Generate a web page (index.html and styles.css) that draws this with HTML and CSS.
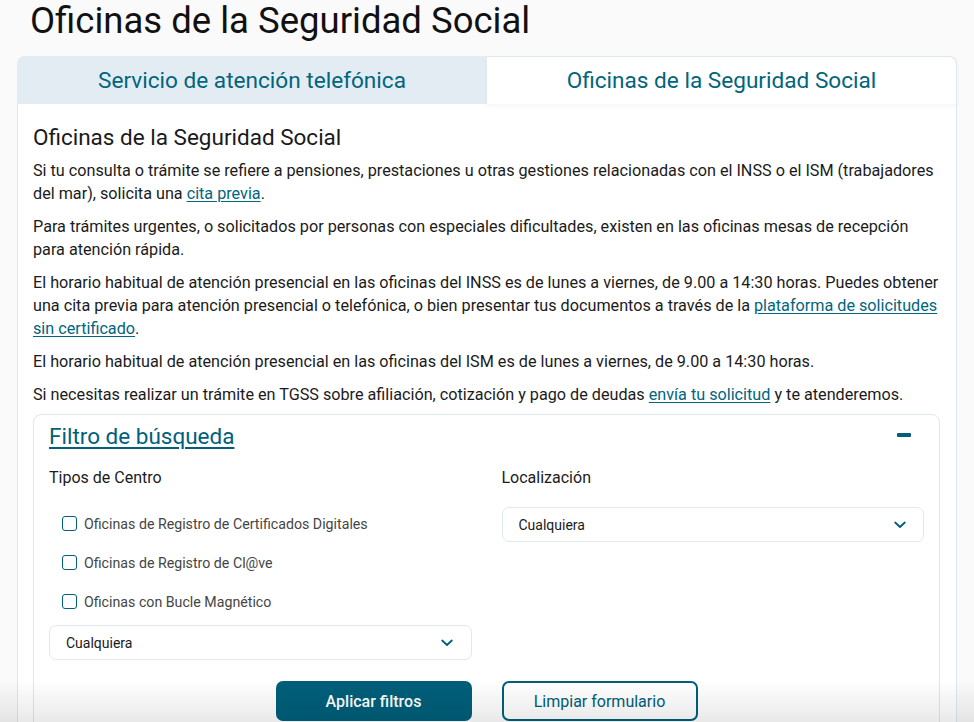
FILE: index.html
```html
<!DOCTYPE html>
<html lang="es">
<head>
<meta charset="utf-8">
<title>Oficinas de la Seguridad Social</title>
<link rel="stylesheet" href="styles.css">
</head>
<body>
<main class="page">
  <h1 class="page-title">Oficinas de la Seguridad Social</h1>
  <section class="card">
    <div class="tabs">
      <button class="tab">Servicio de atención telefónica</button>
      <button class="tab tab-active">Oficinas de la Seguridad Social</button>
    </div>
    <div class="card-body">
      <h2 class="section-title">Oficinas de la Seguridad Social</h2>
      <p>Si tu consulta o trámite se refiere a pensiones, prestaciones u otras gestiones relacionadas con el INSS o el ISM (trabajadores del mar), solicita una <a href="#">cita previa</a>.</p>
      <p>Para trámites urgentes, o solicitados por personas con especiales dificultades, existen en las oficinas mesas de recepción para atención rápida.</p>
      <p>El horario habitual de atención presencial en las oficinas del INSS es de lunes a viernes, de 9.00 a 14:30 horas. Puedes obtener una cita previa para atención presencial o telefónica, o bien presentar tus documentos a través de la <a href="#">plataforma de solicitudes sin certificado</a>.</p>
      <p>El horario habitual de atención presencial en las oficinas del ISM es de lunes a viernes, de 9.00 a 14:30 horas.</p>
      <p class="last-p">Si necesitas realizar un trámite en TGSS sobre afiliación, cotización y pago de deudas <a href="#">envía tu solicitud</a> y te atenderemos.</p>

      <div class="filter">
        <div class="filter-head">
          <a href="#" class="filter-title">Filtro de búsqueda</a>
          <span class="collapse-icon" aria-hidden="true"></span>
        </div>
        <div class="filter-grid">
          <div class="filter-col">
            <div class="field-label">Tipos de Centro</div>
            <ul class="checks">
              <li class="check"><span class="check-box"></span>Oficinas de Registro de Certificados Digitales</li>
              <li class="check"><span class="check-box"></span>Oficinas de Registro de Cl@ve</li>
              <li class="check"><span class="check-box"></span>Oficinas con Bucle Magnético</li>
            </ul>
            <div class="select">
              <span>Cualquiera</span>
              <svg class="chevron" width="12" height="8" viewBox="0 0 12 8"><path d="M1.2 1.5 L6 6 L10.8 1.5" fill="none" stroke="#005f7a" stroke-width="1.8" stroke-linecap="round" stroke-linejoin="round"/></svg>
            </div>
          </div>
          <div class="filter-col">
            <div class="field-label">Localización</div>
            <div class="select select-right">
              <span>Cualquiera</span>
              <svg class="chevron" width="12" height="8" viewBox="0 0 12 8"><path d="M1.2 1.5 L6 6 L10.8 1.5" fill="none" stroke="#005f7a" stroke-width="1.8" stroke-linecap="round" stroke-linejoin="round"/></svg>
            </div>
          </div>
          <button class="btn btn-primary">Aplicar filtros</button>
          <button class="btn btn-outline">Limpiar formulario</button>
        </div>
      </div>
    </div>
  </section>
</main>
<div class="bottom-fade" aria-hidden="true"></div>
</body>
</html>
```

FILE: styles.css
```css
* { box-sizing: border-box; }

html, body {
  margin: 0;
  padding: 0;
  background: #fafafa;
  font-family: Roboto, "Liberation Sans", Arial, sans-serif;
  color: #1b1b1b;
}

.page {
  padding: 0 17px;
}

.page-title {
  margin: 0 0 15px 13px;
  font-size: 36.5px;
  line-height: 41px;
  font-weight: 400;
  color: #111;
}

.card {
  background: #fff;
  border: 1px solid #dde7ee;
  border-radius: 8px;
}

.tabs {
  display: grid;
  grid-template-columns: 1fr 1fr;
  height: 48px;
  margin: -1px -1px 0 -1px;
}

.tab {
  border: 0;
  background: #e3ecf2;
  font-family: Roboto, "Liberation Sans", Arial, sans-serif;
  font-size: 22.6px;
  font-weight: 400;
  color: #00657e;
  padding: 0;
  border-top-left-radius: 8px;
}

.tab-active {
  background: #fff;
  border-radius: 0 8px 0 0;
  border-top: 1px solid #dde7ee;
  border-right: 1px solid #dde7ee;
  box-shadow: 0 3px 5px rgba(0, 0, 0, 0.035);
}

.card-body {
  padding: 20px 16px 40px 15px;
}

.section-title {
  margin: 0 0 8px 0;
  font-size: 22.5px;
  line-height: 27px;
  font-weight: 400;
  color: #1a1a1a;
}

.card-body p {
  margin: 0 0 10px 0;
  font-size: 16.2px;
  line-height: 23px;
  color: #1b1b1b;
}

.card-body p.last-p {
  margin-bottom: 8px;
}

.card-body p a {
  color: #00657e;
  text-decoration: underline;
  text-underline-offset: 2px;
}

.filter {
  border: 1px solid #dde7ee;
  border-radius: 8px;
  padding: 8px 15px 30px 15px;
}

.filter-head {
  display: flex;
  align-items: center;
  justify-content: space-between;
  height: 27px;
}

.filter-title {
  font-size: 22.5px;
  line-height: 27px;
  color: #00607a;
  text-decoration: underline;
  text-decoration-thickness: 2px;
  text-underline-offset: 3px;
}

.collapse-icon {
  width: 14px;
  height: 4px;
  background: #00607a;
  border-radius: 1px;
  margin-right: 13px;
  margin-top: -4px;
}

.filter-grid {
  display: grid;
  grid-template-columns: 1fr 1fr;
  column-gap: 30px;
  row-gap: 21px;
  margin-top: 16px;
}

.filter-col {
  display: flex;
  flex-direction: column;
}

.field-label {
  font-size: 16px;
  line-height: 23px;
  color: #1b1b1b;
  margin-bottom: 15px;
}

.checks {
  list-style: none;
  margin: 0 0 4px 0;
  padding: 0 0 0 13px;
}

.check {
  display: flex;
  align-items: center;
  height: 39px;
  font-size: 14.2px;
  color: #454545;
}

.check-box {
  width: 15px;
  height: 15px;
  border: 1.5px solid #00607a;
  border-radius: 3px;
  margin-right: 7px;
  flex: none;
  background: #fff;
}

.select {
  display: flex;
  align-items: center;
  justify-content: space-between;
  height: 35px;
  border: 1px solid #dfe9ee;
  border-radius: 7px;
  padding: 0 18px 0 16px;
  font-size: 14px;
  color: #1a1a1a;
  background: #fff;
}

.select-right {
  margin-top: 3px;
  padding-right: 17px;
}

.chevron { display: block; }

.btn {
  width: 196px;
  height: 40px;
  border-radius: 7px;
  font-family: Roboto, "Liberation Sans", Arial, sans-serif;
  font-size: 16px;
  font-weight: 500;
  padding: 0;
}

.btn-primary {
  justify-self: end;
  background: #005f7a;
  color: #fff;
  border: 0;
}

.btn-outline {
  justify-self: start;
  background: #fff;
  color: #00607a;
  border: 2px solid #00607a;
  font-weight: 400;
}

.bottom-fade {
  position: fixed;
  left: 0;
  right: 0;
  bottom: 0;
  height: 42px;
  background: linear-gradient(to bottom, rgba(0, 0, 0, 0), rgba(0, 0, 0, 0.085));
  pointer-events: none;
}
```
